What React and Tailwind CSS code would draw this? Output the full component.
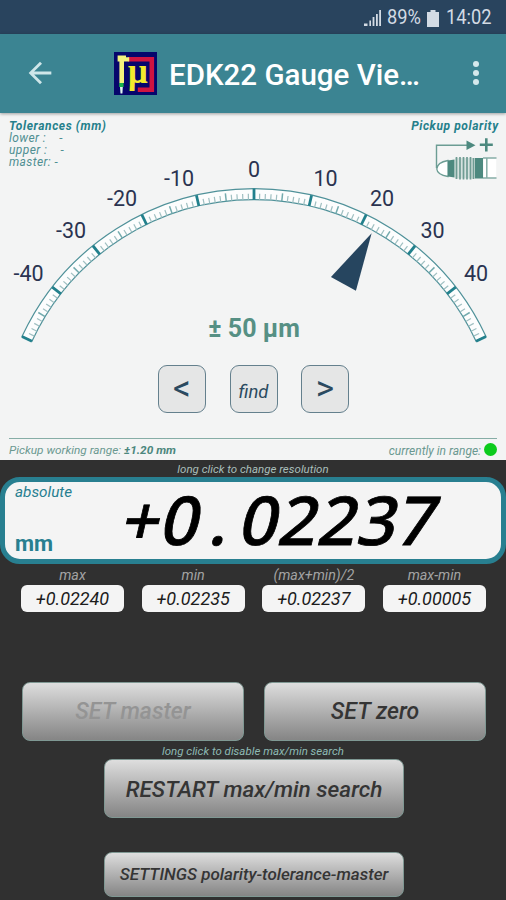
import { MdArrowBack } from "react-icons/md";

const CENTER_X = 254;
const CENTER_Y = 332.7;
const OUTER_R = 256;
const INNER_R = 245;
const DEG_PER_UNIT = 1.3;

const scaleLabels = [
  { text: "-40", x: 28.5, y: 169 },
  { text: "-30", x: 71, y: 126 },
  { text: "-20", x: 122, y: 94 },
  { text: "-10", x: 179, y: 73.5 },
  { text: "0", x: 254, y: 64.5 },
  { text: "10", x: 325.5, y: 73.5 },
  { text: "20", x: 382, y: 94 },
  { text: "30", x: 432.5, y: 126 },
  { text: "40", x: 476, y: 169 },
];

const stats = [
  { label: "max", value: "+0.02240" },
  { label: "min", value: "+0.02235" },
  { label: "(max+min)/2", value: "+0.02237" },
  { label: "max-min", value: "+0.00005" },
];

const point = (value, r) => {
  const a = (value * DEG_PER_UNIT * Math.PI) / 180;
  return [CENTER_X + r * Math.sin(a), CENTER_Y - r * Math.cos(a)];
};

const Tick = ({ value, from, to, color, width }) => {
  const [x1, y1] = point(value, from);
  const [x2, y2] = point(value, to);
  return (
    <line x1={x1} y1={y1} x2={x2} y2={y2} stroke={color} strokeWidth={width} />
  );
};

const Dial = ({ value }) => {
  const ticks = [];
  for (let i = -50; i <= 50; i++) ticks.push(i);
  const outer = [point(-50, OUTER_R), point(50, OUTER_R)];
  const inner = [point(-50, INNER_R), point(50, INNER_R)];
  return (
    <svg width="506" height="240" viewBox="0 0 506 240" className="block">
      <path
        d={`M${outer[0]} A${OUTER_R} ${OUTER_R} 0 0 1 ${outer[1]} L${inner[1]} A${INNER_R} ${INNER_R} 0 0 0 ${inner[0]} Z`}
        fill="#fcfdfd"
        stroke="#4f9199"
        strokeWidth="1.2"
      />
      {ticks.map((t) => {
        if (t % 10 === 0)
          return (
            <Tick key={t} value={t} from={INNER_R} to={OUTER_R} color="#22808c" width={2.8} />
          );
        if (t % 5 === 0)
          return (
            <Tick key={t} value={t} from={INNER_R} to={INNER_R + 8} color="#74abae" width={1.5} />
          );
        return (
          <Tick key={t} value={t} from={INNER_R} to={INNER_R + 6} color="#9fbfc1" width={1.2} />
        );
      })}
      <polygon
        points="0,-242 14.3,-184 -14.3,-184"
        fill="#26455f"
        transform={`translate(${CENTER_X} ${CENTER_Y}) rotate(${value * DEG_PER_UNIT})`}
      />
      {scaleLabels.map((l) => (
        <text
          key={l.text}
          x={l.x}
          y={l.y}
          textAnchor="middle"
          fontSize="21.5"
          fill="#2a3350"
        >
          {l.text}
        </text>
      ))}
    </svg>
  );
};

const Logo = () => (
  <svg width="43" height="43" viewBox="0 0 43 43">
    <rect width="43" height="43" fill="#06066c" />
    <path d="M14 7.3H37.8V37.8H23.8" fill="none" stroke="#cf1440" strokeWidth="4.6" />
    <path d="M3.6 3.5h8.4v1.7h3.2v4.2h-5.2V31H5.4V9.5H3.6z" fill="#f3f37c" />
    <path d="M5.2 31h4.4v4H5.2z" fill="#18b34c" />
    <path d="M6 35h2.8l-.4 6.5H6.5z" fill="#dff5ee" />
    <text
      x="13.8"
      y="31"
      fontSize="35"
      fontWeight="700"
      fill="#f2ea2c"
      className="font-['Liberation_Serif',serif]"
    >
      µ
    </text>
  </svg>
);

const Pickup = () => (
  <svg width="63" height="44" viewBox="0 0 63 44" fill="none">
    <path d="M1.5 32V9.2H33" stroke="#6c9d94" strokeWidth="1.4" />
    <path d="M31.5 4.4L40.5 9.2L31.5 14z" fill="#4d897f" />
    <path d="M51.3 2.3V15.5M44.8 8.8H57.8" stroke="#4d897f" strokeWidth="2.6" />
    <path d="M13 24.5C7 25.5 2 28.5 1.8 33C2 37 7 39.5 13 40.5z" fill="#fff" stroke="#6c9d94" strokeWidth="1.3" />
    <path d="M13 24.5L19.5 23.5V41.5L13 40.5z" fill="#4d897f" />
    <rect x="20" y="22" width="20" height="20.5" fill="#d5e2df" />
    <path
      d="M21.5 21V43M25 21V43.5M28.5 21V43.5M32 21V43.5M35.5 21V43.5M38.5 22V43"
      stroke="#6f9c93"
      strokeWidth="1.7"
    />
    <rect x="40" y="22" width="8.2" height="20.5" fill="#4d897f" />
    <rect x="48.2" y="22" width="13" height="20" fill="#fff" />
    <path d="M48 22H61.5M48 42H61.5M51.8 22V42" stroke="#86ada6" strokeWidth="1.5" />
  </svg>
);

const StatusBar = () => (
  <div className="flex h-[34px] items-center justify-end bg-[#29445e] pr-[15px] pt-[2px] text-[21px] text-[#d3dbe4]">
    <svg width="17" height="16" viewBox="0 0 17 16" className="mr-[6px]" fill="currentColor">
      <path d="M0 13.5h3.5V16H0zM5.4 10.5h1.6V16H5.4zM8.6 7h1.8v9H8.6zM12 4h1.8v12H12zM15.2 0h1.8v16h-1.8z" />
    </svg>
    <span className="w-[34px] whitespace-nowrap">
      <span className="inline-block origin-left scale-x-[0.87]">89%</span>
    </span>
    <svg width="12" height="17" viewBox="0 0 12 17" className="ml-[6px] mr-[7px]" fill="currentColor">
      <path d="M3.5 0h5v2H12v15H0V2h3.5z" />
    </svg>
    <span className="w-[45px] whitespace-nowrap">
      <span className="inline-block origin-left scale-x-[0.87]">14:02</span>
    </span>
  </div>
);

const Header = () => (
  <header className="relative z-10 flex h-[78.5px] items-center bg-[#3b8492] shadow-[0_1px_3px_rgba(0,0,0,0.35)]">
    <button className="ml-[23px]">
      <MdArrowBack className="h-[34px] w-[34px] text-[#cfe6e9]" />
    </button>
    <div className="ml-[57px]">
      <Logo />
    </div>
    <h1 className="ml-[12px] whitespace-nowrap pt-[3px] text-[29.5px] font-medium text-white">
      EDK22 Gauge Vie…
    </h1>
    <button className="ml-auto mr-[27px] flex flex-col gap-[3px]">
      <span className="h-[6px] w-[6px] rounded-full bg-[#d5e8ec]" />
      <span className="h-[6px] w-[6px] rounded-full bg-[#d5e8ec]" />
      <span className="h-[6px] w-[6px] rounded-full bg-[#d5e8ec]" />
    </button>
  </header>
);

const GaugePanel = () => (
  <section className="-mt-[0.5px] flex h-[348px] flex-col bg-[#f3f4f4]">
    <div className="grid">
      <div className="col-start-1 row-start-1">
        <Dial value={22.37} />
      </div>
      <div className="col-start-1 row-start-1 flex justify-between pl-[9px] pr-[8px] pt-[8px] text-[12px] italic leading-[12px] tracking-[0.4px] text-[#4f8f92]">
        <div>
          <p className="font-bold tracking-[0.6px] text-[#25808b]">Tolerances (mm)</p>
          <p className="whitespace-pre">{"lower :    -"}</p>
          <p className="whitespace-pre">{"upper :    -"}</p>
          <p>master: -</p>
        </div>
        <div className="flex flex-col items-end">
          <p className="-mr-[0.6px] font-bold tracking-[0.6px] text-[#25808b]">
            Pickup polarity
          </p>
          <div className="mt-[4px]">
            <Pickup />
          </div>
        </div>
      </div>
    </div>
    <p className="-mt-[38px] pl-[2px] text-center text-[25px] font-bold leading-[30px] text-[#569084]">
      ± 50 µm
    </p>
    <div className="mt-[21px] flex justify-center gap-[23.5px] pl-[1px] text-[#2b4a60]">
      <button className="h-[48px] w-[48px] rounded-[9px] border-[1.5px] border-[#64808d] bg-[#e5e6e6] text-[35px] font-normal leading-[40px]">
        &lt;
      </button>
      <button className="h-[48px] w-[48px] rounded-[9px] border-[1.5px] border-[#64808d] bg-[#e5e6e6] pt-[8px] text-[18.5px] italic">
        find
      </button>
      <button className="h-[48px] w-[48px] rounded-[9px] border-[1.5px] border-[#64808d] bg-[#e5e6e6] text-[35px] font-normal leading-[40px]">
        &gt;
      </button>
    </div>
    <div className="mx-[9px] mt-[25px] flex h-[23px] items-center justify-between border-t border-[#86ada6] pt-[2px] text-[11.8px] italic text-[#6a9890]">
      <p>
        Pickup working range: <b className="text-[#4c877d]">±1.20 mm</b>
      </p>
      <p className="flex items-center gap-[3px] text-[12px]">
        currently in range:
        <span className="-mt-[2px] h-[13px] w-[13px] rounded-full bg-[#0ccb1c]" />
      </p>
    </div>
  </section>
);

const Readout = () => (
  <div className="flex h-[87px] justify-between rounded-[20px] border-[5.5px] border-[#287f90] bg-[#f4f4f4]">
    <div className="flex flex-col justify-between pb-[2px] pl-[10px] pt-[1px] text-[#287f90]">
      <p className="text-[15.3px] italic leading-[18px]">absolute</p>
      <p className="text-[22px] font-bold leading-[26px]">mm</p>
    </div>
    <p className="mr-[62px] -mt-px -skew-x-[13deg] whitespace-nowrap font-['Noto_Sans',sans-serif] text-[67.5px] font-medium leading-[76px] tracking-[0.8px] text-black [-webkit-text-stroke:0.8px_#000]">
      +0<span className="inline-block w-[39.4px] text-center">.</span>02237
    </p>
  </div>
);

const ActionButton = ({ className, children }) => (
  <button
    className={`rounded-[8px] border border-[#7f9893] bg-linear-to-b from-[#dedede] to-[#858585] italic font-medium ${className}`}
  >
    {children}
  </button>
);

const App = () => {
  return (
    <div className="flex h-[900px] w-[506px] flex-col overflow-hidden bg-[#303030] font-['Roboto',sans-serif]">
      <StatusBar />
      <Header />
      <GaugePanel />
      <p className="h-[17px] text-center text-[11.5px] italic leading-[19px] text-[#a9bfbb]">
        long click to change resolution
      </p>
      <Readout />
      <div className="ml-[21px] mr-[20px] flex justify-between">
        {stats.map((s) => (
          <div key={s.label} className="w-[103px] text-center italic">
            <p className="text-[14.3px] leading-[22px] -mb-px text-[#a3a3a3]">{s.label}</p>
            <p className="h-[27px] rounded-[6px] bg-[#f4f4f4] text-[18px] leading-[28px] text-[#1c1c1c]">
              {s.value}
            </p>
          </div>
        ))}
      </div>
      <div className="ml-[22px] mr-[20px] mt-[70px] flex justify-between">
        <ActionButton className="h-[59px] w-[222px] pt-[2px] text-[23px] text-[#949494]">
          SET master
        </ActionButton>
        <ActionButton className="h-[59px] w-[222px] pt-[2px] text-[23px] text-[#353535]">
          SET zero
        </ActionButton>
      </div>
      <p className="h-[18px] text-center text-[11.5px] italic leading-[21px] text-[#8ebab4]">
        long click to disable max/min search
      </p>
      <ActionButton className="ml-[104px] h-[59px] w-[300px] pt-[2px] text-[22.6px] text-[#353535]">
        RESTART max/min search
      </ActionButton>
      <ActionButton className="ml-[104px] mt-[34px] h-[45px] w-[300px] text-[17px] text-[#353535]">
        SETTINGS polarity-tolerance-master
      </ActionButton>
    </div>
  );
};

export default App;
